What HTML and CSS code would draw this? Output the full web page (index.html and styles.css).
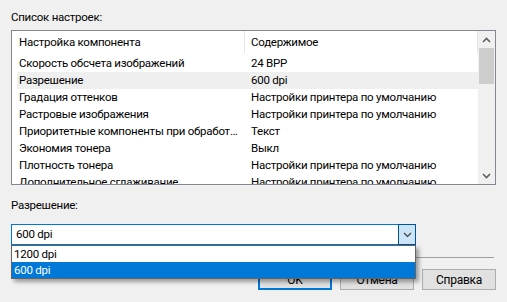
FILE: index.html
```html
<!DOCTYPE html>
<html lang="ru">
<head>
  <meta charset="UTF-8">
  <meta name="viewport" content="width=device-width, initial-scale=1.0">
  <title>Дополнительные параметры</title>
  <link rel="stylesheet" href="styles.css">
</head>
<body>
  <div class="dialog">
    <div class="label top-label">Список настроек:</div>

    <div class="listbox">
      <div class="list-area">
        <div class="row header">
          <div class="cell name">Настройка компонента</div>
          <div class="cell value">Содержимое</div>
        </div>
        <div class="rows">
          <div class="row">
            <div class="cell name">Скорость обсчета изображений</div>
            <div class="cell value">24 BPP</div>
          </div>
          <div class="row selected">
            <div class="cell name">Разрешение</div>
            <div class="cell value">600 dpi</div>
          </div>
          <div class="row">
            <div class="cell name">Градация оттенков</div>
            <div class="cell value">Настройки принтера по умолчанию</div>
          </div>
          <div class="row">
            <div class="cell name">Растровые изображения</div>
            <div class="cell value">Настройки принтера по умолчанию</div>
          </div>
          <div class="row">
            <div class="cell name">Приоритетные компоненты при обработке документа</div>
            <div class="cell value">Текст</div>
          </div>
          <div class="row">
            <div class="cell name">Экономия тонера</div>
            <div class="cell value">Выкл</div>
          </div>
          <div class="row">
            <div class="cell name">Плотность тонера</div>
            <div class="cell value">Настройки принтера по умолчанию</div>
          </div>
          <div class="row">
            <div class="cell name">Дополнительное сглаживание</div>
            <div class="cell value">Настройки принтера по умолчанию</div>
          </div>
        </div>
      </div>

      <div class="scrollbar">
        <div class="arrow">
          <svg width="9" height="6" viewBox="0 0 9 6"><path d="M1 5 L4.5 1.5 L8 5" fill="none" stroke="#606060" stroke-width="1.6"/></svg>
        </div>
        <div class="track">
          <div class="thumb"></div>
        </div>
        <div class="arrow">
          <svg width="9" height="6" viewBox="0 0 9 6"><path d="M1 1 L4.5 4.5 L8 1" fill="none" stroke="#606060" stroke-width="1.6"/></svg>
        </div>
      </div>
    </div>

    <div class="label res-label">Разрешение:</div>

    <div class="combo-wrap">
      <div class="combo">
        <div class="combo-text">600 dpi</div>
        <div class="combo-btn">
          <svg width="9" height="6" viewBox="0 0 9 6"><path d="M1 1 L4.5 4.5 L8 1" fill="none" stroke="#3c3c3c" stroke-width="1.2"/></svg>
        </div>
      </div>
      <div class="dropdown">
        <div class="option">1200 dpi</div>
        <div class="option active">600 dpi</div>
      </div>
    </div>

    <div class="separator"></div>

    <div class="buttons">
      <button class="btn default">OK</button>
      <button class="btn">Отмена</button>
      <button class="btn">Справка</button>
    </div>
  </div>
</body>
</html>
```

FILE: styles.css
```css
body {
  margin: 0;
  background-color: #f0f0f0;
  font-family: "Segoe UI", Roboto, "Noto Sans", sans-serif;
  font-size: 11.5px;
  letter-spacing: -0.25px;
  color: #000;
}

.dialog {
  padding: 9px 11px 0 11px;
}

.label {
  line-height: 16px;
  height: 16px;
}

.top-label {
  margin-bottom: 5px;
}

.listbox {
  display: flex;
  height: 155px;
  box-sizing: border-box;
  border: 1px solid #828790;
  background-color: #fff;
  overflow: hidden;
}

.list-area {
  flex: 1;
  overflow: hidden;
}

.row {
  display: flex;
  margin-left: 5px;
  width: 461px;
  height: 17px;
  line-height: 17px;
  white-space: nowrap;
}

.row.header {
  height: 24px;
  line-height: 23px;
}

.row.selected {
  background-color: #efefef;
}

.cell {
  overflow: hidden;
  text-overflow: ellipsis;
}

.cell.name {
  width: 228px;
  padding-left: 2px;
  padding-right: 6px;
  box-sizing: border-box;
}

.cell.value {
  flex: 1;
  padding-left: 6px;
}

.header .cell {
  border-right: 1px solid #e5e5e5;
  height: 22px;
}

.scrollbar {
  width: 17px;
  display: flex;
  flex-direction: column;
  background-color: #f0f0f0;
}

.arrow {
  height: 17px;
  display: flex;
  align-items: center;
  justify-content: center;
}

.track {
  flex: 1;
}

.thumb {
  margin: 0 1px;
  height: 36px;
  background-color: #cdcdcd;
}

.res-label {
  margin-top: 12px;
  margin-bottom: 11px;
}

.combo-wrap {
  position: relative;
  width: 405px;
}

.combo {
  display: flex;
  height: 21px;
  box-sizing: border-box;
  border: 1px solid #0078d7;
  background-color: #fff;
}

.combo-text {
  flex: 1;
  padding-left: 4px;
  line-height: 19px;
}

.combo-btn {
  width: 16px;
  margin: -1px -1px -1px 0;
  border: 1px solid #005499;
  background-color: #cce4f7;
  display: flex;
  align-items: center;
  justify-content: center;
}

.dropdown {
  position: absolute;
  top: 21px;
  left: 0;
  right: 0;
  border: 1px solid #646464;
  background-color: #fff;
  box-shadow: 3px 3px 4px rgba(0, 0, 0, 0.35);
  z-index: 2;
}

.option {
  height: 16px;
  line-height: 16px;
  padding-left: 2px;
}

.option.active {
  background-color: #0078d7;
  color: #fff;
}

.separator {
  margin-top: 12px;
  margin-right: 2px;
  height: 1px;
  background-color: #a0a0a0;
}

.buttons {
  display: flex;
  justify-content: flex-end;
  gap: 8px;
  margin-top: 11px;
}

.btn {
  width: 74px;
  height: 21px;
  padding: 0;
  font-family: inherit;
  font-size: 12px;
  letter-spacing: inherit;
  color: #000;
  background-color: #e1e1e1;
  border: 1px solid #adadad;
}

.btn.default {
  border: 2px solid #0078d7;
}
```
